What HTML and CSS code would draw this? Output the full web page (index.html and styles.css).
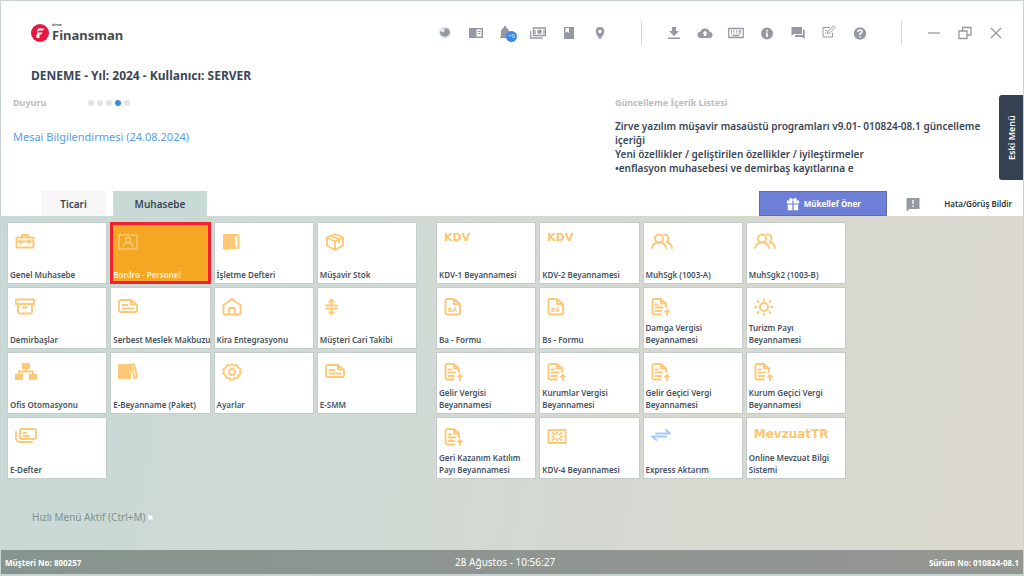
FILE: index.html
```html
<!DOCTYPE html>
<html lang="tr">
<head>
<meta charset="utf-8">
<title>Zirve Finansman</title>
<link rel="stylesheet" href="styles.css">
</head>
<body>
<svg class="defs" aria-hidden="true">
  <symbol id="i-case" viewBox="0 0 20 20"><path d="M2.500 5.500h15q1 0 1 1v8q0 1-1 1h-15q-1 0-1-1v-8q0-1 1-1zM7 5V3h6v2M1.500 9.500h17M6 8v3.500M14 8v3.500"/></symbol>
  <symbol id="i-person" viewBox="0 0 20 20"><path d="M1 3h18v14H1zM5.500 14c.5-3 2.500-3.500 4.500-3.500s4 .5 4.500 3.500"/><circle cx="10" cy="8" r="2.500"/></symbol>
  <symbol id="i-book" viewBox="0 0 20 20"><path class="solid" d="M1 2h12v15H6l-2 2-1-2H1z"/><path d="M13 3h2.500q1 0 1 1v11q0 1-1 1H13"/></symbol>
  <symbol id="i-box" viewBox="0 0 20 20"><path d="M10 2l8 3.500v8L10 18l-8-4.500v-8zM2 5.500L10 9.500l8-4M10 9.500v8M6 3.800l8 3.700v3"/></symbol>
  <symbol id="i-archive" viewBox="0 0 20 20"><path d="M1 2.500h18V7H1zM3 7v8q0 1.500 1.500 1.500h11q1.500 0 1.500-1.500V7M8 10.500h4"/></symbol>
  <symbol id="i-receipt" viewBox="0 0 20 20"><path d="M3 3h10l6 5v5.500q0 1.500-1.500 1.500H3q-2 0-2-2V5q0-2 2-2zM13 3v4.500h5.500M4.500 8h5M4.500 11.500h11"/></symbol>
  <symbol id="i-home" viewBox="0 0 20 20"><path d="M1.500 8L10 2l8.500 6v7.500q0 2-2 2h-13q-2 0-2-2zM7 17v-5q0-1 1-1h4q1 0 1 1v5"/></symbol>
  <symbol id="i-split" viewBox="0 0 20 20"><path d="M1 8.500h11M1 11.500h11M6.500 8V3M6.500 12v5"/><path class="solid" d="M2.500 5.500l4-4 4 4zM2.500 14.500l4 4 4-4z"/></symbol>
  <symbol id="i-org" viewBox="0 0 22 20"><path class="solid" d="M7 1h8v6H7zM0 12h8v6H0zM14 12h8v6h-8z"/><path d="M11 6v3.500M4 13V9.500h14V13"/></symbol>
  <symbol id="i-binders" viewBox="0 0 20 20"><path class="solid" d="M0 2h13v15H0z"/><path d="M13 3l3-.8 3.500 13-3 .8zM14.500 6.500l2-.5"/></symbol>
  <symbol id="i-gear" viewBox="0 0 20 20"><path d="M8 3.500l2-1.500 2 1.500 3-.5 1 2.500 2.500 1.500L18 9.500l.8 2-2.300 1.500-.5 2.500-3 .5-1.500 1.500h-3L7 16l-3-.5-.5-2.500-2.300-1.500.8-2L1.500 7 4 5.500 5 3z"/><circle cx="10" cy="10" r="3"/></symbol>
  <symbol id="i-cards" viewBox="0 0 22 20"><path d="M7 2h12q2 0 2 2v6q0 2-2 2H7q-2 0-2-2V4q0-2 2-2zM1 5v6q0 4 4 4h12M8.500 6h2.500M8.500 9h5.500"/></symbol>
  <symbol id="i-file" viewBox="0 0 20 20"><path d="M3.500 2H10l6 5v8.500q0 2-2 2H3.500q-2 0-2-2V4q0-2 2-2zM10 2v5h6"/></symbol>
  <symbol id="i-users" viewBox="0 0 22 20"><circle cx="8" cy="6.500" r="4"/><path d="M1 16q1-5.500 7-5.500t7 5.500M13 2.500q4.500-.5 4.500 4 0 2-2 3.500 4.500 1 5.500 6"/></symbol>
  <symbol id="i-fileup" viewBox="0 0 20 20"><path d="M10 17.500H3.500q-2 0-2-2V4q0-2 2-2H10l5 4.500V10M10 2v4.500h5M4.500 7.500H7M4.500 10.500h7M4.500 14h5.500M16 18v-4"/><path class="solid" d="M12.300 15.500L16 11.500l3.700 4z"/></symbol>
  <symbol id="i-sun" viewBox="0 0 20 20"><circle cx="10" cy="10" r="4"/><path d="M10 2v1M10 17v1M1 10h1.500M17.500 10H19M3.500 4l1 1M16.500 4l-1 1M3.500 16l1-1M16.500 16l-1-1"/></symbol>
  <symbol id="i-frame" viewBox="0 0 20 20"><path d="M1.500 3h17v13h-17zM5.500 6l2 1.500M14.500 6l-2 1.500M5.500 13l2-1.500M14.500 13l-2-1.500M10 5.500v1.500M10 12v1.500M5 9.500h1.500M13.500 9.500H15"/></symbol>
  <symbol id="i-swap" viewBox="0 0 20 20"><path d="M5 6.500h14L15 3M15 9.500H1L5.500 13"/></symbol>
</svg>

<div class="window">
  <header class="topbar">
    <div class="logo">
      <svg class="logo-mark" viewBox="0 0 18 18"><circle cx="9" cy="9" r="9" fill="#e3173f"/><path d="M7 4.500h6l-1 2H8L6 9zM6.500 8.500h5l-1 2H8.500V14h-3v-3z" fill="#fff"/></svg>
      <div class="logo-text"><span class="logo-small">zirve</span><span class="logo-name">Finansman</span></div>
    </div>
    <nav class="tools" aria-label="Araçlar">
      <button aria-label="Durum"><svg viewBox="0 0 16 16"><circle cx="8" cy="7.500" r="6" fill="#e4e5e8"/><path d="M3 6l3 1.500 2-2-1-2q4-1 5.500 2 1 3-1.500 5t-5.500.5Q2.500 9.500 3 6z"/></svg></button>
      <button aria-label="Okuyucu"><svg viewBox="0 0 16 16"><path fill-rule="evenodd" d="M1 3h14v10H1zM8.500 4.500v7h5v-7zM9.500 6h3v1h-3zM9.500 8h3v1h-3z"/></svg></button>
      <button class="bell" aria-label="Bildirimler"><svg viewBox="0 0 16 16"><path d="M5 1h2v1.500q3 1 3 4.500v4l1.500 2h-11L2 11V7q0-3.500 3-4.500z"/></svg><span class="badge">+9</span></button>
      <button aria-label="Ödemeler"><svg viewBox="0 0 16 16"><path class="line" d="M3.500 3h12v7.500h-12zM.7 6v7h12"/><circle cx="9.500" cy="6.800" r="2.300"/><path class="line" d="M5 5v4M14 5v4"/></svg></button>
      <button aria-label="Kitap"><svg viewBox="0 0 16 16"><path fill-rule="evenodd" d="M3 2h10v12H3zM4.500 3v5l1.700-1.500L8 8V3z"/></svg></button>
      <button aria-label="Konum"><svg viewBox="0 0 16 16"><path fill-rule="evenodd" d="M8 2q4.300 0 4.300 4.300Q12.300 9 8 14.500 3.700 9 3.700 6.300 3.700 2 8 2zM8 4.700a1.700 1.700 0 100 3.400 1.700 1.700 0 000-3.400z"/></svg></button>
      <span class="sep"></span>
      <button aria-label="İndir"><svg viewBox="0 0 16 16"><path d="M6 2h4v4h3l-5 5-5-5h3zM2 12.500h12V14H2z"/></svg></button>
      <button aria-label="Buluta yükle"><svg viewBox="0 0 16 16"><path fill-rule="evenodd" d="M4 13Q.5 13 .5 9.800.5 7 3.500 6.500 4.500 3.500 8 3.500t4.500 3.200q3 .3 3 3.200 0 3.100-3.500 3.100zM6.800 11h2.400V8.500h1.600L8 5.800 5.200 8.500h1.600z"/></svg></button>
      <button aria-label="Klavye"><svg viewBox="0 0 16 16"><path class="line" d="M.8 3.500h14.400v9H.8zM3 6h1M5.500 6h1M8 6h1M10.500 6h2.500M3 8.200h1M5.500 8.200h1M8 8.200h1M10.500 8.200h2.500M4.500 10.500h7"/></svg></button>
      <button aria-label="Bilgi"><svg viewBox="0 0 16 16"><path fill-rule="evenodd" d="M8 2.500a6 6 0 100 12 6 6 0 000-12zM7.200 5h1.600v1.500H7.200zM7.200 7.500h1.600V12H7.200z"/></svg></button>
      <button aria-label="Mesajlar"><svg viewBox="0 0 16 16"><path d="M1.500 2H12v7H4l-2.500 2zM13 4.500h1.700V14l-2.400-2H5v-2h8z"/></svg></button>
      <button aria-label="Düzenle"><svg class="thin" viewBox="0 0 16 16"><path class="line" d="M9 2.500H2V12h9.500V8M6 8.500l1-2.500L12.500 1l1.500 1.500L8.500 8zM4 5.500h2M4 8h1"/></svg></button>
      <button aria-label="Yardım"><svg viewBox="0 0 16 16"><circle cx="8" cy="8.500" r="6.200"/><path d="M6 7q0-2 2-2t2 1.700Q10 8 8 8.500V10M8 11.300v1.300" fill="none" stroke="#fff" stroke-width="1.400"/></svg></button>
      <span class="sep"></span>
      <button aria-label="Simge durumuna küçült"><svg viewBox="0 0 16 16"><path class="line" d="M2 8h12"/></svg></button>
      <button aria-label="Önceki boyut"><svg viewBox="0 0 16 16"><path class="line" d="M2 6h8v7.500H2zM5.500 6V2.500H14V10h-4"/></svg></button>
      <button aria-label="Kapat"><svg viewBox="0 0 16 16"><path class="line" d="M3 3l10 10M13 3L3 13"/></svg></button>
    </nav>
  </header>

  <h1 class="company">DENEME - Yıl: 2024 - Kullanıcı: SERVER</h1>

  <section class="info">
    <div class="news">
      <div class="news-head"><h2>Duyuru</h2><div class="dots"><i></i><i></i><i></i><i class="on"></i><i></i></div></div>
      <a class="news-link" href="#">Mesai Bilgilendirmesi (24.08.2024)</a>
    </div>
    <div class="updates">
      <h2>Güncelleme İçerik Listesi</h2>
      <p>Zirve yazılım müşavir masaüstü programları v9.01- 010824-08.1 güncelleme içeriği<br>Yeni özellikler / geliştirilen özellikler / iyileştirmeler<br>•enflasyon muhasebesi ve demirbaş kayıtlarına e</p>
    </div>
    <button class="old-menu">Eski Menü</button>
  </section>

  <div class="tabs">
    <button class="tab">Ticari</button>
    <button class="tab active">Muhasebe</button>
    <button class="suggest"><svg viewBox="0 0 16 16"><path fill-rule="evenodd" d="M1 4h3Q3 1 5.500 1 7 1 8 3q1-2 2.500-2Q13 1 12 4h3v3.500H8.700V4H7.300v3.500H1zM2 8.500h5.300V15H2zM8.700 8.500H14V15H8.700z"/></svg>Mükellef Öner</button>
    <a class="report" href="#"><svg viewBox="0 0 16 16"><path fill-rule="evenodd" d="M1.500 2h13v11H4.500l-3 2.500zM7.300 4v4h1.400V4zM7.300 9.500V11h1.400V9.500z"/></svg><span>Hata/Görüş Bildir</span></a>
  </div>

  <main class="board">
    <div class="groups">
      <div class="group">
        <button class="tile"><svg><use href="#i-case"/></svg><span>Genel Muhasebe</span></button>
        <button class="tile selected"><svg><use href="#i-person"/></svg><span>Bordro - Personel</span></button>
        <button class="tile"><svg><use href="#i-book"/></svg><span>İşletme Defteri</span></button>
        <button class="tile"><svg><use href="#i-box"/></svg><span>Müşavir Stok</span></button>
        <button class="tile"><svg><use href="#i-archive"/></svg><span>Demirbaşlar</span></button>
        <button class="tile"><svg><use href="#i-receipt"/></svg><span>Serbest Meslek Makbuzu</span></button>
        <button class="tile"><svg><use href="#i-home"/></svg><span>Kira Entegrasyonu</span></button>
        <button class="tile"><svg><use href="#i-split"/></svg><span>Müşteri Cari Takibi</span></button>
        <button class="tile"><svg class="wide"><use href="#i-org"/></svg><span>Ofis Otomasyonu</span></button>
        <button class="tile"><svg><use href="#i-binders"/></svg><span>E-Beyanname (Paket)</span></button>
        <button class="tile"><svg><use href="#i-gear"/></svg><span>Ayarlar</span></button>
        <button class="tile"><svg><use href="#i-receipt"/></svg><span>E-SMM</span></button>
        <button class="tile"><svg class="wide"><use href="#i-cards"/></svg><span>E-Defter</span></button>
      </div>
      <div class="group">
        <button class="tile"><b class="kdv">KDV</b><span>KDV-1 Beyannamesi</span></button>
        <button class="tile"><b class="kdv">KDV</b><span>KDV-2 Beyannamesi</span></button>
        <button class="tile"><svg class="wide"><use href="#i-users"/></svg><span>MuhSgk (1003-A)</span></button>
        <button class="tile"><svg class="wide"><use href="#i-users"/></svg><span>MuhSgk2 (1003-B)</span></button>
        <button class="tile"><svg viewBox="0 0 20 20"><use href="#i-file"/><text x="4" y="15">BA</text></svg><span>Ba - Formu</span></button>
        <button class="tile"><svg viewBox="0 0 20 20"><use href="#i-file"/><text x="4" y="15">BS</text></svg><span>Bs - Formu</span></button>
        <button class="tile"><svg><use href="#i-fileup"/></svg><span>Damga Vergisi<br>Beyannamesi</span></button>
        <button class="tile"><svg><use href="#i-sun"/></svg><span>Turizm Payı<br>Beyannamesi</span></button>
        <button class="tile"><svg><use href="#i-fileup"/></svg><span>Gelir Vergisi<br>Beyannamesi</span></button>
        <button class="tile"><svg><use href="#i-fileup"/></svg><span>Kurumlar Vergisi<br>Beyannamesi</span></button>
        <button class="tile"><svg><use href="#i-fileup"/></svg><span>Gelir Geçici Vergi<br>Beyannamesi</span></button>
        <button class="tile"><svg><use href="#i-fileup"/></svg><span>Kurum Geçici Vergi<br>Beyannamesi</span></button>
        <button class="tile"><svg><use href="#i-fileup"/></svg><span>Geri Kazanım Katılım<br>Payı Beyannamesi</span></button>
        <button class="tile"><svg><use href="#i-frame"/></svg><span>KDV-4 Beyannamesi</span></button>
        <button class="tile"><svg class="blue"><use href="#i-swap"/></svg><span>Express Aktarım</span></button>
        <button class="tile"><b class="mevzuat">MevzuatTR</b><span>Online Mevzuat Bilgi<br>Sistemi</span></button>
      </div>
    </div>
    <label class="quick">Hızlı Menü Aktif (Ctrl+M)<input type="checkbox"></label>
  </main>

  <footer class="status">
    <strong>Müşteri No: 800257</strong>
    <span>28 Ağustos - 10:56:27</span>
    <strong>Sürüm No: 010824-08.1</strong>
  </footer>
</div>
</body>
</html>
```

FILE: styles.css
```css
* { box-sizing: border-box; }
body {
  margin: 0;
  font-family: "Noto Sans", "Open Sans", sans-serif;
  font-size: 8px;
  color: #3a4657;
  background: #fff;
}
button { font: inherit; color: inherit; border: 0; padding: 0; background: none; }
h1, h2, p { margin: 0; }
a { text-decoration: none; }
.defs { position: absolute; width: 0; height: 0; }

.window {
  display: flex;
  flex-direction: column;
  min-height: 100vh;
  border: 1px solid #c8d4d1;
  border-bottom: 2px solid #c8d4d1;
}

.topbar { display: flex; justify-content: space-between; align-items: center; height: 63px; padding: 0 12px 0 30px; }
.logo { display: flex; align-items: center; gap: 3px; }
.logo-mark { width: 18px; height: 18px; }
.logo-text { display: flex; flex-direction: column; color: #4b4b4d; font-weight: 700; }
.logo-small { font-size: 4px; line-height: 4px; }
.logo-name { font-size: 13px; line-height: 16px; }
.tools { display: flex; align-items: center; }
.tools button { position: relative; width: 31px; height: 24px; display: flex; align-items: center; justify-content: center; }
.tools svg { width: 16px; height: 16px; fill: #9699a1; }
.tools .line { fill: none; stroke: #9699a1; stroke-width: 1.3; }
.tools .thin .line { stroke-width: 1; }
.sep { width: 1px; height: 24px; margin: 0 16px 0 26px; background: #d5d7da; }
.badge {
  position: absolute; right: 5px; bottom: 3px;
  width: 11px; height: 11px; border-radius: 50%;
  background: #3f8ae0; color: #d5e6fa;
  font-size: 6px; line-height: 11px; text-align: center;
}

.company { margin-left: 30px; padding-top: 4px; font-size: 12px; line-height: 16px; }

.info { display: grid; grid-template-columns: minmax(0, 1fr) 384px 24px; margin-top: 11px; padding-left: 12px; height: 85px; }
.info h2 { font-size: 9px; line-height: 16px; color: #bcbcbc; }
.news-head { display: flex; align-items: center; gap: 42px; }
.dots { display: flex; gap: 3px; }
.dots i { width: 6px; height: 6px; border-radius: 50%; background: #e1e4e9; }
.dots .on { background: #3f8ae0; }
.news-link { display: block; margin-top: 18px; font-size: 11px; line-height: 16px; color: #5a9ceb; }
.updates p { margin-top: 8px; padding-right: 8px; font-size: 10px; line-height: 14px; font-weight: 600; }
.old-menu {
  writing-mode: vertical-rl; transform: rotate(180deg);
  background: #354053; color: #fff; border-radius: 0 3px 3px 0;
  font-size: 9px; font-weight: 600;
}

.tabs { display: flex; align-items: stretch; height: 25px; margin-top: 11px; padding: 0 11px 0 40px; }
.tab { width: 65px; margin-right: 7px; background: #f7f7f7; font-size: 10px; font-weight: 600; }
.tab.active { width: 94px; background: #c8dad6; }
.suggest {
  display: flex; align-items: center; justify-content: center; gap: 4px;
  width: 128px; margin-left: auto;
  background: #6e7fd8; border: 1px solid #5e6cb5; color: #fff;
  font-size: 8px; font-weight: 700;
}
.suggest svg { width: 14px; height: 14px; fill: #fff; }
.report { display: flex; align-items: center; gap: 23px; margin-left: 18px; color: #2b2f38; font-size: 8px; font-weight: 600; }
.report svg { width: 16px; height: 16px; fill: #9699a1; }

.board {
  flex: 1;
  padding: 6px;
  background: linear-gradient(100deg, #c7d9d6 0%, #cfdad5 30%, #d6d8d1 65%, #dbd8cf 100%);
}
.groups { display: flex; align-items: flex-start; gap: 19px; }
.group { flex: 0 0 41%; max-width: 410px; display: grid; grid-template-columns: repeat(4, minmax(0, 1fr)); grid-auto-rows: 62px; gap: 3px; }
.tile {
  display: flex; flex-direction: column; justify-content: space-between; align-items: flex-start;
  padding: 9px 2px 2px; background: #fff; border: 1px solid #c5cdca;
  color: #46515f;
  font-weight: 600; line-height: 12px; text-align: left; white-space: nowrap;
}
.tile svg { width: 20px; height: 20px; margin-left: 5px; fill: none; stroke: #fdc977; stroke-width: 1.9; stroke-linejoin: round; stroke-linecap: round; }
.tile .wide { width: 22px; }
.tile .blue { stroke: #a3caf8; }
.solid { fill: #fdc977; stroke: none; }
.tile text { fill: #fdc977; stroke: none; font-family: "DejaVu Sans", sans-serif; font-size: 6px; font-weight: 700; }
.kdv, .mevzuat { margin-left: 5px; color: #fdc66f; font-family: "DejaVu Sans", sans-serif; font-weight: 700; }
.kdv { font-size: 11px; line-height: 11px; }
.mevzuat { font-size: 12px; line-height: 14px; }
.tile.selected { background: #f5a623; border: 3px solid #f2202e; color: #fff1d8; padding: 7px 0 0; }
.tile.selected svg { stroke: #fdcb7b; stroke-width: 1.4; }

.quick { display: flex; align-items: center; gap: 2px; margin: 30px 0 0 25px; width: max-content; font-size: 10px; line-height: 16px; color: #82908f; }
.quick input { appearance: none; width: 5px; height: 5px; margin: 0; background: #fff; border: 1px solid #e3e9e7; }

.status {
  display: flex; justify-content: space-between; align-items: center;
  height: 24px; padding: 0 4px; color: #fff; font-size: 8px;
  background: linear-gradient(90deg, #87958f, #8f9591 50%, #949691);
}
.status span { font-size: 10px; }
```
